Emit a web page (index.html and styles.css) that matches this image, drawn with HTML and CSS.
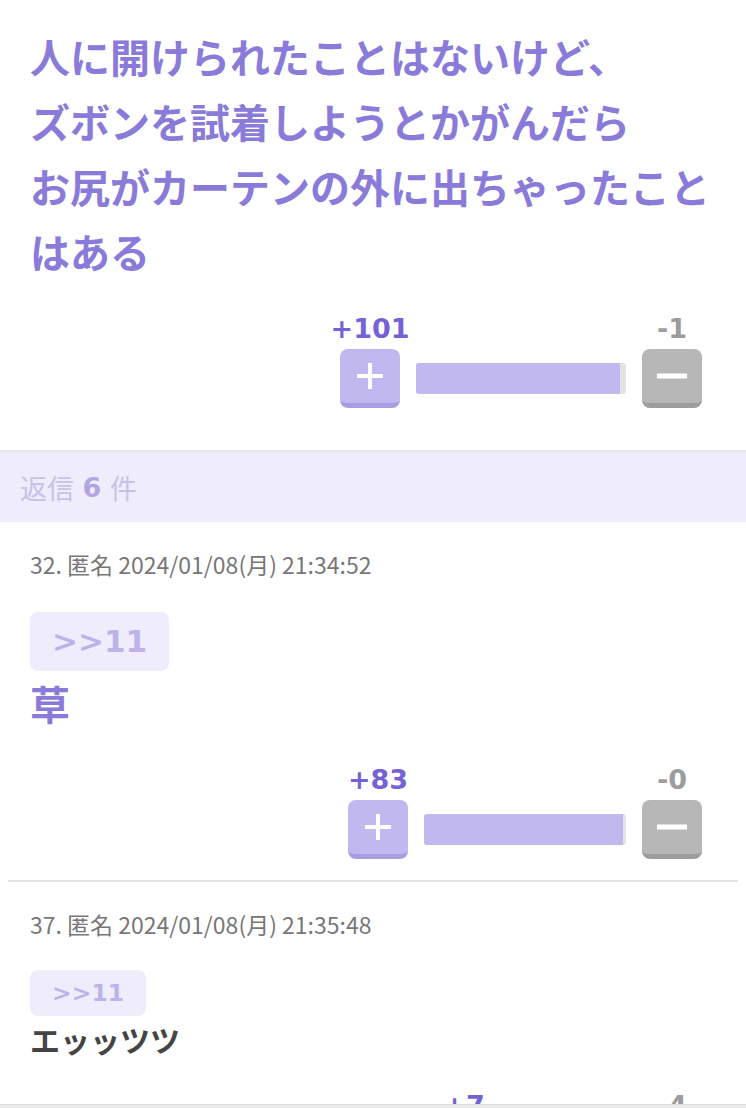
FILE: index.html
```html
<!DOCTYPE html>
<html lang="ja">
<head>
<meta charset="utf-8">
<title>返信</title>
<link rel="stylesheet" href="styles.css">
</head>
<body>
<main class="thread">
  <section class="op">
    <p class="op-text">人に開けられたことはないけど、<br>ズボンを試着しようとかがんだら<br>お尻がカーテンの外に出ちゃったこと<br>はある</p>
    <div class="vote">
      <div class="vcol">
        <span class="vnum vnum-up">+101</span>
        <span class="vbtn vbtn-up"><svg viewBox="0 0 28 28" width="28" height="28"><path d="M14 1v26M1 14h26" stroke="#fff" stroke-width="4" fill="none"/></svg></span>
      </div>
      <div class="vbar vbar-a"><span class="vfill" style="width:97%"></span></div>
      <div class="vcol">
        <span class="vnum vnum-down">-1</span>
        <span class="vbtn vbtn-down"><svg viewBox="0 0 30 6" width="30" height="6"><path d="M0 3h30" stroke="#fff" stroke-width="5" fill="none"/></svg></span>
      </div>
    </div>
  </section>

  <div class="replies-head">返信 <b>6</b> 件</div>

  <ul class="replies">
    <li class="reply">
      <div class="meta">32. 匿名 2024/01/08(月) 21:34:52</div>
      <span class="anchor anchor-l">&gt;&gt;11</span>
      <p class="rtext rtext-l">草</p>
      <div class="vote">
        <div class="vcol">
          <span class="vnum vnum-up">+83</span>
          <span class="vbtn vbtn-up"><svg viewBox="0 0 28 28" width="28" height="28"><path d="M14 1v26M1 14h26" stroke="#fff" stroke-width="4" fill="none"/></svg></span>
        </div>
        <div class="vbar vbar-b"><span class="vfill" style="width:98.5%"></span></div>
        <div class="vcol">
          <span class="vnum vnum-down">-0</span>
          <span class="vbtn vbtn-down"><svg viewBox="0 0 30 6" width="30" height="6"><path d="M0 3h30" stroke="#fff" stroke-width="5" fill="none"/></svg></span>
        </div>
      </div>
    </li>
    <li class="reply">
      <div class="meta">37. 匿名 2024/01/08(月) 21:35:48</div>
      <span class="anchor anchor-s">&gt;&gt;11</span>
      <p class="rtext rtext-s">エッッツツ</p>
      <div class="vote">
        <div class="vcol">
          <span class="vnum vnum-up">+7</span>
          <span class="vbtn vbtn-up"><svg viewBox="0 0 28 28" width="28" height="28"><path d="M14 1v26M1 14h26" stroke="#fff" stroke-width="4" fill="none"/></svg></span>
        </div>
        <div class="vbar vbar-c"><span class="vfill" style="width:64%"></span></div>
        <div class="vcol">
          <span class="vnum vnum-down">-4</span>
          <span class="vbtn vbtn-down"><svg viewBox="0 0 30 6" width="30" height="6"><path d="M0 3h30" stroke="#fff" stroke-width="5" fill="none"/></svg></span>
        </div>
      </div>
    </li>
  </ul>
</main>
<div class="bottom-bar"></div>
</body>
</html>
```

FILE: styles.css
```css
html, body {
  margin: 0;
  padding: 0;
  background: #fff;
}
body {
  font-family: "DejaVu Sans", "Noto Sans CJK JP", sans-serif;
  color: #444;
}
.thread {
  display: block;
}
.op {
  padding: 24px 0 42px 30px;
}
.op-text {
  margin: 0;
  padding-right: 30px;
  font-family: "Noto Sans CJK JP", sans-serif;
  font-weight: 700;
  font-size: 40px;
  line-height: 65px;
  color: #8a7ad9;
}
.vote {
  display: flex;
  justify-content: flex-end;
  align-items: flex-end;
  margin-top: 29px;
}
.op .vote {
  margin-right: 44px;
}
.vcol {
  width: 60px;
  display: flex;
  flex-direction: column;
  align-items: center;
}
.vnum {
  display: block;
  white-space: nowrap;
  font-family: "DejaVu Sans", sans-serif;
  font-weight: 700;
  font-size: 27px;
  line-height: 32px;
  margin-bottom: 4px;
}
.vnum-up { color: #7662d6; }
.vnum-down { color: #9c9c9c; }
.vbtn {
  box-sizing: border-box;
  width: 60px;
  height: 59px;
  border-radius: 8px;
  display: flex;
  align-items: center;
  justify-content: center;
}
.vbtn-up {
  background: #c2b8f0;
  border-bottom: 5px solid #a99de2;
}
.vbtn-down {
  background: #b7b7b7;
  border-bottom: 5px solid #9d9d9d;
}
.vbtn svg { display: block; }
.vbar {
  height: 31px;
  margin: 0 16px 14px;
  background: #e3e3e3;
  border-radius: 3px;
  overflow: hidden;
  display: flex;
}
.vbar-a { width: 210px; }
.vbar-b { width: 202px; }
.vbar-c { width: 116px; }
.vfill {
  display: block;
  height: 100%;
  background: #c2b8f0;
}
.replies-head {
  border-top: 2px solid #e6e6e6;
  background: #efecfb;
  height: 72px;
  box-sizing: border-box;
  padding-left: 20px;
  display: flex;
  align-items: center;
  font-family: "DejaVu Sans", "Noto Sans CJK JP", sans-serif;
  font-size: 27px;
  color: #c8c1ea;
  white-space: pre;
}
.replies-head b {
  color: #b1a6e4;
  font-weight: 700;
}
.replies {
  list-style: none;
  margin: 0 8px;
  padding: 0;
}
.reply {
  padding: 26px 36px 21px 22px;
  border-bottom: 2px solid #e4e4e4;
}
.meta {
  font-family: "Noto Sans CJK JP", sans-serif;
  font-size: 23px;
  line-height: 33px;
  color: #777;
}
.anchor {
  display: inline-block;
  margin-top: 31px;
  background: #efecfb;
  border-radius: 8px;
  color: #bdb3ea;
  font-family: "DejaVu Sans", sans-serif;
  font-weight: 700;
}
.anchor-l {
  font-size: 31px;
  line-height: 37px;
  padding: 11px 22px;
}
.anchor-s {
  font-size: 23.5px;
  line-height: 28px;
  padding: 9px 22px;
  margin-top: 29px;
}
.rtext {
  margin: 0;
  font-family: "Noto Sans CJK JP", sans-serif;
  font-weight: 700;
}
.rtext-l {
  font-size: 40px;
  line-height: 65px;
  color: #8a7ad9;
}
.rtext-s {
  font-size: 30px;
  line-height: 46px;
  color: #444;
}
.reply .vote {
  margin-top: 28px;
}
.bottom-bar {
  position: fixed;
  left: 0;
  right: 0;
  bottom: 0;
  height: 3px;
  background: #ebebeb;
  border-top: 1px solid #dedede;
}
```
